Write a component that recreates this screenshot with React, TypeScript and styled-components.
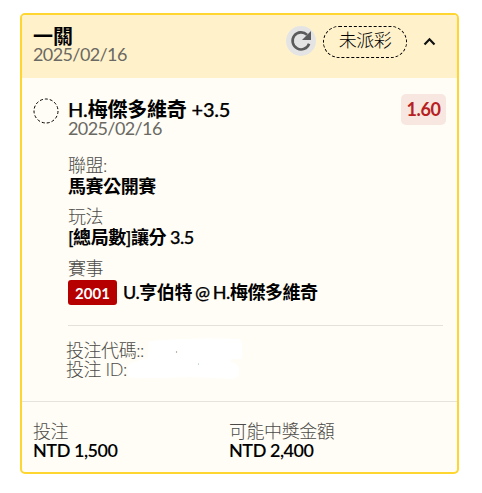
import React from "react";
import styled, { createGlobalStyle } from "styled-components";

const GlobalStyle = createGlobalStyle`
  * { box-sizing: border-box; }
  body {
    margin: 0;
    background: #fff;
    font-family: Lato, "Noto Sans CJK TC", sans-serif;
    font-size: 18px;
    letter-spacing: -0.45px;
    color: #000;
  }
`;

const Page = styled.main`
  padding: 13px 23px 19px 20px;
`;

const Card = styled.article`
  height: 461px;
  border: 2px solid #ffd530;
  border-radius: 5px;
  background: #fffdf5;
  overflow: hidden;
`;

const Header = styled.header`
  display: flex;
  justify-content: space-between;
  height: 63px;
  padding: 11px 21px 0 11px;
  background: #fff2cb;
`;

const Label = styled.div<{ $height?: number }>`
  height: ${(p) => p.$height ?? 18}px;
  line-height: ${(p) => p.$height ?? 18}px;
  font-weight: 300;
  color: #4c4b48;
  white-space: nowrap;
`;

const DateText = styled.time`
  display: block;
  height: 18px;
  line-height: 18px;
  letter-spacing: -0.6px;
  color: #6b6963;
`;

const Strong = styled.div<{ $size?: number; $height?: number; $spacing?: number }>`
  height: ${(p) => p.$height ?? 20}px;
  line-height: ${(p) => p.$height ?? 20}px;
  font-size: ${(p) => p.$size ?? 18}px;
  letter-spacing: ${(p) => p.$spacing ?? -0.45}px;
  font-weight: 600;
  white-space: nowrap;
`;

const Title = styled(Strong)`
  height: 19px;
  line-height: 21px;
`;

const Medium = styled.span`
  font-weight: 500;
  -webkit-text-stroke: 0.25px #000;
`;

const Versus = styled(Strong)`
  word-spacing: -1px;
`;

const Actions = styled.div`
  display: flex;
  align-items: flex-start;
`;

const RefreshButton = styled.button`
  display: grid;
  place-items: center;
  width: 30px;
  height: 30px;
  margin-right: 7px;
  padding: 0;
  border: 0;
  border-radius: 50%;
  background: #e4e4e4;
`;

const Status = styled.span`
  width: 84px;
  height: 32px;
  border: 1px dashed #000;
  border-radius: 16px;
  line-height: 27px;
  text-align: center;
  font-weight: 300;
`;

const Chevron = styled.svg`
  margin: 11px 0 0 16px;
`;

const Selection = styled.section`
  display: grid;
  grid-template-columns: 34px 1fr auto;
  padding: 16px 11px 0 12px;
  height: 247px;
`;

const Marker = styled.svg`
  margin: 4px 0 0 -1px;
`;

const Odds = styled.span`
  width: 45px;
  height: 31px;
  border-radius: 5px;
  background: #f8e7e1;
  color: #b72020;
  font-size: 18px;
  font-weight: 700;
  line-height: 31px;
  text-align: center;
`;

const Group = styled.div<{ $top: number }>`
  margin-top: ${(p) => p.$top}px;
`;

const MatchRow = styled.div`
  display: flex;
  gap: 6px;
  margin-top: 2px;
`;

const Code = styled.span`
  width: 49px;
  height: 25px;
  border-radius: 3px;
  background: #b60000;
  color: #fff;
  font-size: 15px;
  font-weight: 700;
  letter-spacing: 0;
  line-height: 27px;
  text-align: center;
`;

const References = styled.section`
  height: 76px;
  margin: 0 14px 0 46px;
  padding-top: 15px;
  border-top: 1px solid #e4e1dc;
`;

const ReferenceRow = styled.div`
  display: flex;
  position: relative;
  left: -2px;
`;

const Redaction = styled.svg`
  position: absolute;
  left: 61px;
  top: -4px;
`;

const Totals = styled.footer`
  display: grid;
  grid-template-columns: 196px 1fr;
  padding: 20px 12px 0 11px;
  border-top: 1px solid #e4e3dc;
`;

export default function App() {
  return (
    <>
      <GlobalStyle />
      <Page>
        <Card>
          <Header>
            <div>
              <Title $size={20} $spacing={-0.1}>一關</Title>
              <DateText>2025/02/16</DateText>
            </div>
            <Actions>
              <RefreshButton aria-label="refresh">
                <svg width="22" height="22" viewBox="0 0 22 22">
                  <path d="M17.1 4.9A8.5 8.5 0 1 0 19.1 13.7" fill="none" stroke="#5b5b5b" strokeWidth="2.6" />
                  <path d="M21 1v9h-9z" fill="#5b5b5b" />
                </svg>
              </RefreshButton>
              <Status>未派彩</Status>
              <Chevron width="13" height="9" viewBox="0 0 13 9">
                <path d="M1.5 7.5L6.5 2.3L11.5 7.5" fill="none" stroke="#111" strokeWidth="2.2" />
              </Chevron>
            </Actions>
          </Header>
          <Selection>
            <Marker width="26" height="26" viewBox="0 0 26 26">
              <circle cx="13" cy="13" r="12" fill="none" stroke="#000" strokeDasharray="3 2" />
            </Marker>
            <div>
              <Group $top={5}>
                <Strong $size={20} $spacing={-0.2}>
                  <Medium>H.</Medium>梅傑多維奇<Medium> +3.5</Medium>
                </Strong>
                <DateText>2025/02/16</DateText>
              </Group>
              <Group $top={18}>
                <Label $height={20}>聯盟:</Label>
                <Strong $height={22}>馬賽公開賽</Strong>
              </Group>
              <Group $top={9}>
                <Label $height={20}>玩法</Label>
                <Strong $height={22}>
                  <Medium>[</Medium>總局數<Medium>]</Medium>讓分<Medium> 3.5</Medium>
                </Strong>
              </Group>
              <Group $top={10}>
                <Label $height={20}>賽事</Label>
                <MatchRow>
                  <Code>2001</Code>
                  <Versus $height={24}>
                    <Medium>U.</Medium>亨伯特<Medium> @ H.</Medium>梅傑多維奇
                  </Versus>
                </MatchRow>
              </Group>
            </div>
            <Odds>1.60</Odds>
          </Selection>
          <References>
            <ReferenceRow>
              <Label $height={19}>投注代碼::</Label>
              <Redaction width="118" height="45" viewBox="0 0 118 45">
                <path d="M22 4Q65 0 111 2Q116 3 115 9V22H104V25Q114 27 112 36Q112 42 103 42Q70 39 38 41H3Q0 38 1 29Q2 25 10 24L21 21Z" fill="#fff" />
                <circle cx="49.5" cy="15" r="0.7" fill="#9a8a78" />
                <circle cx="71.5" cy="27" r="0.5" fill="#78a0a0" />
              </Redaction>
            </ReferenceRow>
            <ReferenceRow>
              <Label $height={19}>投注 ID:</Label>
            </ReferenceRow>
          </References>
          <Totals>
            <div>
              <Label>投注</Label>
              <Strong>NTD 1,500</Strong>
            </div>
            <div>
              <Label>可能中獎金額</Label>
              <Strong>NTD 2,400</Strong>
            </div>
          </Totals>
        </Card>
      </Page>
    </>
  );
}
